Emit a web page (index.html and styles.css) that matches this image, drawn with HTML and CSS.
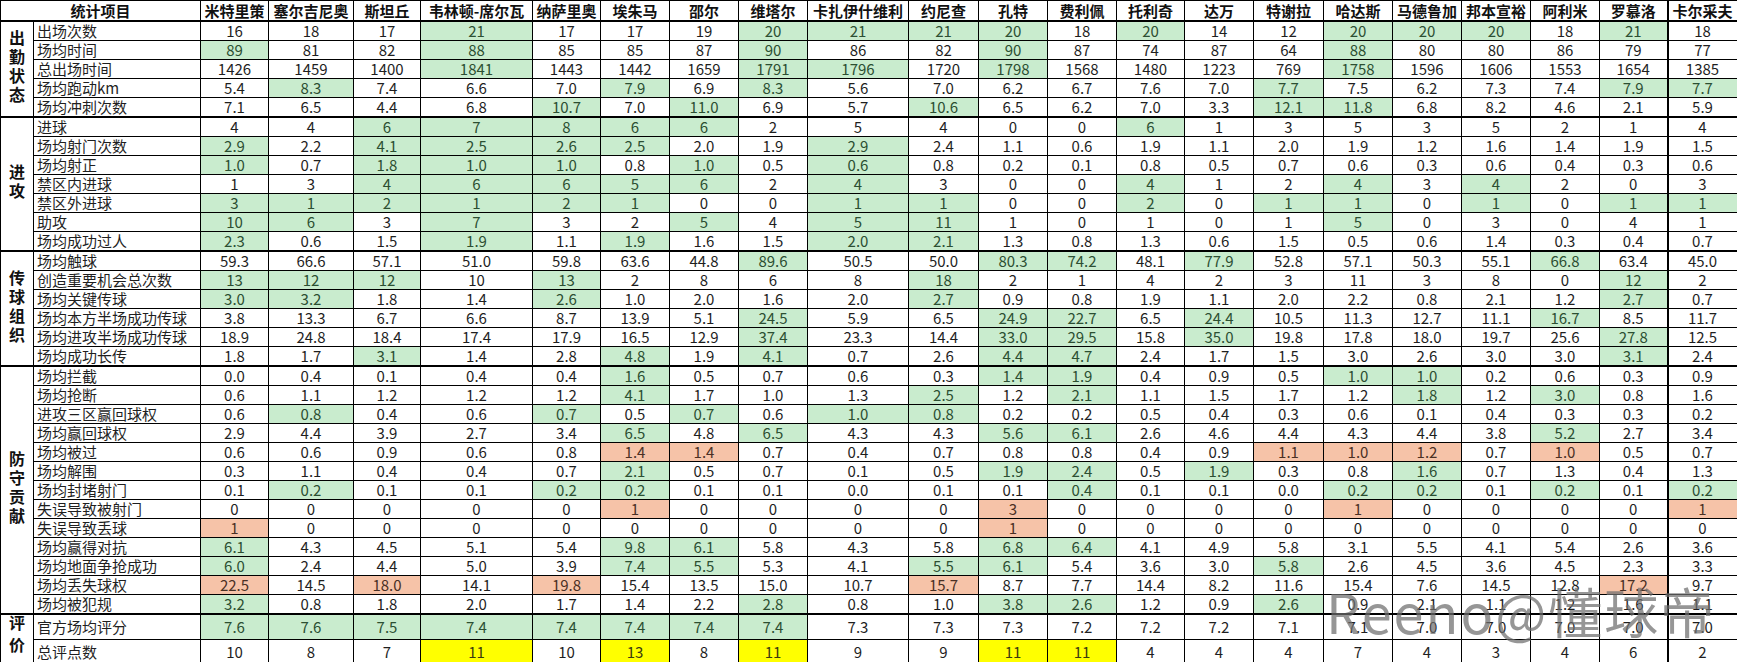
FILE: index.html
```html
<!DOCTYPE html>
<html lang="zh">
<head>
<meta charset="utf-8">
<title>球员数据统计</title>
<link rel="stylesheet" href="styles.css">
</head>
<body>
<div class="sheet">
<table class="stats">
<colgroup>
<col class="w-cat"><col class="w-lbl"><col class="w68"><col class="w85"><col class="w67"><col class="w112"><col class="w68"><col class="w69"><col class="w69"><col class="w69"><col class="w101"><col class="w70"><col class="w69"><col class="w69"><col class="w68"><col class="w69"><col class="w70"><col class="w69"><col class="w69"><col class="w69"><col class="w69"><col class="w68"><col class="w70">
</colgroup>
<thead>
<tr><th colspan="2">统计项目</th><th>米特里策</th><th>塞尔吉尼奥</th><th>斯坦丘</th><th>韦林顿-席尔瓦</th><th>纳萨里奥</th><th>埃朱马</th><th>邵尔</th><th>维塔尔</th><th>卡扎伊什维利</th><th>约尼查</th><th>孔特</th><th>费利佩</th><th>托利奇</th><th>达万</th><th>特谢拉</th><th>哈达斯</th><th>马德鲁加</th><th>邦本宣裕</th><th>阿利米</th><th>罗慕洛</th><th class="last">卡尔采夫</th></tr>
</thead>
<tbody>
<tr><td class="cat" rowspan="5"><span class="vt">出勤状态</span></td><td class="lbl">出场次数</td><td>16</td><td>18</td><td>17</td><td class="g">21</td><td>17</td><td>17</td><td>19</td><td class="g">20</td><td class="g">21</td><td class="g">21</td><td class="g">20</td><td>18</td><td class="g">20</td><td>14</td><td>12</td><td class="g">20</td><td class="g">20</td><td class="g">20</td><td>18</td><td class="g">21</td><td class="last">18</td></tr>
<tr><td class="lbl">场均时间</td><td class="g">89</td><td>81</td><td>82</td><td class="g">88</td><td>85</td><td>85</td><td>87</td><td class="g">90</td><td>86</td><td>82</td><td class="g">90</td><td>87</td><td>74</td><td>87</td><td>64</td><td class="g">88</td><td>80</td><td>80</td><td>86</td><td>79</td><td class="last">77</td></tr>
<tr><td class="lbl">总出场时间</td><td>1426</td><td>1459</td><td>1400</td><td class="g">1841</td><td>1443</td><td>1442</td><td>1659</td><td class="g">1791</td><td class="g">1796</td><td>1720</td><td class="g">1798</td><td>1568</td><td>1480</td><td>1223</td><td>769</td><td class="g">1758</td><td>1596</td><td>1606</td><td>1553</td><td>1654</td><td class="last">1385</td></tr>
<tr><td class="lbl">场均跑动km</td><td>5.4</td><td class="g">8.3</td><td>7.4</td><td>6.6</td><td>7.0</td><td class="g">7.9</td><td>6.9</td><td class="g">8.3</td><td>5.6</td><td>7.0</td><td>6.2</td><td>6.7</td><td>7.6</td><td>7.0</td><td class="g">7.7</td><td>7.5</td><td>6.2</td><td>7.3</td><td>7.4</td><td class="g">7.9</td><td class="last g">7.7</td></tr>
<tr><td class="lbl">场均冲刺次数</td><td>7.1</td><td>6.5</td><td>4.4</td><td>6.8</td><td class="g">10.7</td><td>7.0</td><td class="g">11.0</td><td>6.9</td><td>5.7</td><td class="g">10.6</td><td>6.5</td><td>6.2</td><td>7.0</td><td>3.3</td><td class="g">12.1</td><td class="g">11.8</td><td>6.8</td><td>8.2</td><td>4.6</td><td>2.1</td><td class="last">5.9</td></tr>

<tr class="sep"><td class="cat" rowspan="7"><span class="vt">进攻</span></td><td class="lbl">进球</td><td>4</td><td>4</td><td class="g">6</td><td class="g">7</td><td class="g">8</td><td class="g">6</td><td class="g">6</td><td>2</td><td>5</td><td>4</td><td>0</td><td>0</td><td class="g">6</td><td>1</td><td>3</td><td>5</td><td>3</td><td>5</td><td>2</td><td>1</td><td class="last">4</td></tr>
<tr><td class="lbl">场均射门次数</td><td class="g">2.9</td><td>2.2</td><td class="g">4.1</td><td class="g">2.5</td><td class="g">2.6</td><td class="g">2.5</td><td>2.0</td><td>1.9</td><td class="g">2.9</td><td>2.4</td><td>1.1</td><td>0.6</td><td>1.9</td><td>1.1</td><td>2.0</td><td>1.9</td><td>1.2</td><td>1.6</td><td>1.4</td><td>1.9</td><td class="last">1.5</td></tr>
<tr><td class="lbl">场均射正</td><td class="g">1.0</td><td>0.7</td><td class="g">1.8</td><td class="g">1.0</td><td class="g">1.0</td><td>0.8</td><td class="g">1.0</td><td>0.5</td><td class="g">0.6</td><td>0.8</td><td>0.2</td><td>0.1</td><td>0.8</td><td>0.5</td><td>0.7</td><td>0.6</td><td>0.3</td><td>0.6</td><td>0.4</td><td>0.3</td><td class="last">0.6</td></tr>
<tr><td class="lbl">禁区内进球</td><td>1</td><td>3</td><td class="g">4</td><td class="g">6</td><td class="g">6</td><td class="g">5</td><td class="g">6</td><td>2</td><td class="g">4</td><td>3</td><td>0</td><td>0</td><td class="g">4</td><td>1</td><td>2</td><td class="g">4</td><td>3</td><td class="g">4</td><td>2</td><td>0</td><td class="last">3</td></tr>
<tr><td class="lbl">禁区外进球</td><td class="g">3</td><td class="g">1</td><td class="g">2</td><td class="g">1</td><td class="g">2</td><td class="g">1</td><td>0</td><td>0</td><td class="g">1</td><td class="g">1</td><td>0</td><td>0</td><td class="g">2</td><td>0</td><td class="g">1</td><td class="g">1</td><td>0</td><td class="g">1</td><td>0</td><td class="g">1</td><td class="last g">1</td></tr>
<tr><td class="lbl">助攻</td><td class="g">10</td><td class="g">6</td><td>3</td><td class="g">7</td><td>3</td><td>2</td><td class="g">5</td><td>4</td><td class="g">5</td><td class="g">11</td><td>1</td><td>0</td><td>1</td><td>0</td><td>1</td><td class="g">5</td><td>0</td><td>3</td><td>0</td><td>4</td><td class="last">1</td></tr>
<tr><td class="lbl">场均成功过人</td><td class="g">2.3</td><td>0.6</td><td>1.5</td><td class="g">1.9</td><td>1.1</td><td class="g">1.9</td><td>1.6</td><td>1.5</td><td class="g">2.0</td><td class="g">2.1</td><td>1.3</td><td>0.8</td><td>1.3</td><td>0.6</td><td>1.5</td><td>0.5</td><td>0.6</td><td>1.4</td><td>0.3</td><td>0.4</td><td class="last">0.7</td></tr>

<tr class="sep"><td class="cat" rowspan="6"><span class="vt">传球组织</span></td><td class="lbl">场均触球</td><td>59.3</td><td>66.6</td><td>57.1</td><td>51.0</td><td>59.8</td><td>63.6</td><td>44.8</td><td class="g">89.6</td><td>50.5</td><td>50.0</td><td class="g">80.3</td><td class="g">74.2</td><td>48.1</td><td class="g">77.9</td><td>52.8</td><td>57.1</td><td>50.3</td><td>55.1</td><td class="g">66.8</td><td>63.4</td><td class="last">45.0</td></tr>
<tr><td class="lbl">创造重要机会总次数</td><td class="g">13</td><td class="g">12</td><td class="g">12</td><td>10</td><td class="g">13</td><td>2</td><td>8</td><td>6</td><td>8</td><td class="g">18</td><td>2</td><td>1</td><td>4</td><td>2</td><td>3</td><td>11</td><td>3</td><td>8</td><td>0</td><td class="g">12</td><td class="last">2</td></tr>
<tr><td class="lbl">场均关键传球</td><td class="g">3.0</td><td class="g">3.2</td><td>1.8</td><td>1.4</td><td class="g">2.6</td><td>1.0</td><td>2.0</td><td>1.6</td><td>2.0</td><td class="g">2.7</td><td>0.9</td><td>0.8</td><td>1.9</td><td>1.1</td><td>2.0</td><td>2.2</td><td>0.8</td><td>2.1</td><td>1.2</td><td class="g">2.7</td><td class="last">0.7</td></tr>
<tr><td class="lbl">场均本方半场成功传球</td><td>3.8</td><td>13.3</td><td>6.7</td><td>6.6</td><td>8.7</td><td>13.9</td><td>5.1</td><td class="g">24.5</td><td>5.9</td><td>6.5</td><td class="g">24.9</td><td class="g">22.7</td><td>6.5</td><td class="g">24.4</td><td>10.5</td><td>11.3</td><td>12.7</td><td>11.1</td><td class="g">16.7</td><td>8.5</td><td class="last">11.7</td></tr>
<tr><td class="lbl">场均进攻半场成功传球</td><td>18.9</td><td>24.8</td><td>18.4</td><td>17.4</td><td>17.9</td><td>16.5</td><td>12.9</td><td class="g">37.4</td><td>23.3</td><td>14.4</td><td class="g">33.0</td><td class="g">29.5</td><td>15.8</td><td class="g">35.0</td><td>19.8</td><td>17.8</td><td>18.0</td><td>19.7</td><td>25.6</td><td class="g">27.8</td><td class="last">12.5</td></tr>
<tr><td class="lbl">场均成功长传</td><td>1.8</td><td>1.7</td><td class="g">3.1</td><td>1.4</td><td>2.8</td><td class="g">4.8</td><td>1.9</td><td class="g">4.1</td><td>0.7</td><td>2.6</td><td class="g">4.4</td><td class="g">4.7</td><td>2.4</td><td>1.7</td><td>1.5</td><td>3.0</td><td>2.6</td><td>3.0</td><td>3.0</td><td class="g">3.1</td><td class="last">2.4</td></tr>

<tr class="sep"><td class="cat" rowspan="13"><span class="vt">防守贡献</span></td><td class="lbl">场均拦截</td><td>0.0</td><td>0.4</td><td>0.1</td><td>0.4</td><td>0.4</td><td class="g">1.6</td><td>0.5</td><td>0.7</td><td>0.6</td><td>0.3</td><td class="g">1.4</td><td class="g">1.9</td><td>0.4</td><td>0.9</td><td>0.5</td><td class="g">1.0</td><td class="g">1.0</td><td>0.2</td><td>0.6</td><td>0.3</td><td class="last">0.9</td></tr>
<tr><td class="lbl">场均抢断</td><td>0.6</td><td>1.1</td><td>1.2</td><td>1.2</td><td>1.2</td><td class="g">4.1</td><td>1.7</td><td>1.0</td><td>1.3</td><td class="g">2.5</td><td>1.2</td><td class="g">2.1</td><td>1.1</td><td>1.5</td><td>1.7</td><td>1.2</td><td class="g">1.8</td><td>1.2</td><td class="g">3.0</td><td>0.8</td><td class="last">1.6</td></tr>
<tr><td class="lbl">进攻三区赢回球权</td><td>0.6</td><td class="g">0.8</td><td>0.4</td><td>0.6</td><td class="g">0.7</td><td>0.5</td><td class="g">0.7</td><td>0.6</td><td class="g">1.0</td><td class="g">0.8</td><td>0.2</td><td>0.2</td><td>0.5</td><td>0.4</td><td>0.3</td><td>0.6</td><td>0.1</td><td>0.4</td><td>0.3</td><td>0.3</td><td class="last">0.2</td></tr>
<tr><td class="lbl">场均赢回球权</td><td>2.9</td><td>4.4</td><td>3.9</td><td>2.7</td><td>3.4</td><td class="g">6.5</td><td>4.8</td><td class="g">6.5</td><td>4.3</td><td>4.3</td><td class="g">5.6</td><td class="g">6.1</td><td>2.6</td><td>4.6</td><td>4.4</td><td>4.3</td><td>4.4</td><td>3.8</td><td class="g">5.2</td><td>2.7</td><td class="last">3.4</td></tr>
<tr><td class="lbl">场均被过</td><td>0.6</td><td>0.6</td><td>0.9</td><td>0.6</td><td>0.8</td><td class="r">1.4</td><td class="r">1.4</td><td>0.7</td><td>0.4</td><td>0.7</td><td>0.8</td><td>0.8</td><td>0.4</td><td>0.9</td><td class="r">1.1</td><td class="r">1.0</td><td class="r">1.2</td><td>0.7</td><td class="r">1.0</td><td>0.5</td><td class="last">0.7</td></tr>
<tr><td class="lbl">场均解围</td><td>0.3</td><td>1.1</td><td>0.4</td><td>0.4</td><td>0.7</td><td class="g">2.1</td><td>0.5</td><td>0.7</td><td>0.1</td><td>0.5</td><td class="g">1.9</td><td class="g">2.4</td><td>0.5</td><td class="g">1.9</td><td>0.3</td><td>0.8</td><td class="g">1.6</td><td>0.7</td><td>1.3</td><td>0.4</td><td class="last">1.3</td></tr>
<tr><td class="lbl">场均封堵射门</td><td>0.1</td><td class="g">0.2</td><td>0.1</td><td>0.1</td><td class="g">0.2</td><td class="g">0.2</td><td>0.1</td><td>0.1</td><td>0.0</td><td>0.1</td><td>0.1</td><td class="g">0.4</td><td>0.1</td><td>0.1</td><td>0.0</td><td class="g">0.2</td><td class="g">0.2</td><td>0.1</td><td class="g">0.2</td><td>0.1</td><td class="last g">0.2</td></tr>
<tr><td class="lbl">失误导致被射门</td><td>0</td><td>0</td><td>0</td><td>0</td><td>0</td><td class="r">1</td><td>0</td><td>0</td><td>0</td><td>0</td><td class="r">3</td><td>0</td><td>0</td><td>0</td><td>0</td><td class="r">1</td><td>0</td><td>0</td><td>0</td><td>0</td><td class="last r">1</td></tr>
<tr><td class="lbl">失误导致丢球</td><td class="r">1</td><td>0</td><td>0</td><td>0</td><td>0</td><td>0</td><td>0</td><td>0</td><td>0</td><td>0</td><td class="r">1</td><td>0</td><td>0</td><td>0</td><td>0</td><td>0</td><td>0</td><td>0</td><td>0</td><td>0</td><td class="last">0</td></tr>
<tr><td class="lbl">场均赢得对抗</td><td class="g">6.1</td><td>4.3</td><td>4.5</td><td>5.1</td><td>5.4</td><td class="g">9.8</td><td class="g">6.1</td><td>5.8</td><td>4.3</td><td>5.8</td><td class="g">6.8</td><td class="g">6.4</td><td>4.1</td><td>4.9</td><td>5.8</td><td>3.1</td><td>5.5</td><td>4.1</td><td>5.4</td><td>2.6</td><td class="last">3.6</td></tr>
<tr><td class="lbl">场均地面争抢成功</td><td class="g">6.0</td><td>2.4</td><td>4.4</td><td>5.0</td><td>3.9</td><td class="g">7.4</td><td class="g">5.5</td><td>5.3</td><td>4.1</td><td class="g">5.5</td><td class="g">6.1</td><td>5.4</td><td>3.6</td><td>3.0</td><td class="g">5.8</td><td>2.6</td><td>4.5</td><td>3.6</td><td>4.5</td><td>2.3</td><td class="last">3.3</td></tr>
<tr><td class="lbl">场均丢失球权</td><td class="r">22.5</td><td>14.5</td><td class="r">18.0</td><td>14.1</td><td class="r">19.8</td><td>15.4</td><td>13.5</td><td>15.0</td><td>10.7</td><td class="r">15.7</td><td>8.7</td><td>7.7</td><td>14.4</td><td>8.2</td><td>11.6</td><td>15.4</td><td>7.6</td><td>14.5</td><td>12.8</td><td class="r">17.2</td><td class="last">9.7</td></tr>
<tr><td class="lbl">场均被犯规</td><td class="g">3.2</td><td>0.8</td><td>1.8</td><td>2.0</td><td>1.7</td><td>1.4</td><td>2.2</td><td class="g">2.8</td><td>0.8</td><td>1.0</td><td class="g">3.8</td><td class="g">2.6</td><td>1.2</td><td>0.9</td><td class="g">2.6</td><td>0.9</td><td>2.1</td><td>1.1</td><td>1.2</td><td>1.6</td><td class="last">1.1</td></tr>

<tr class="sep eval"><td class="cat" rowspan="2"><span class="vt vt-wide">评价</span></td><td class="lbl">官方场均评分</td><td class="g">7.6</td><td class="g">7.6</td><td class="g">7.5</td><td class="g">7.4</td><td class="g">7.4</td><td class="g">7.4</td><td class="g">7.4</td><td class="g">7.4</td><td>7.3</td><td>7.3</td><td>7.3</td><td>7.2</td><td>7.2</td><td>7.2</td><td>7.1</td><td>7.1</td><td>7.0</td><td>7.0</td><td>7.0</td><td>7.0</td><td class="last">7.0</td></tr>
<tr class="eval end"><td class="lbl">总评点数</td><td>10</td><td>8</td><td>7</td><td class="y">11</td><td>10</td><td class="y">13</td><td>8</td><td class="y">11</td><td>9</td><td>9</td><td class="y">11</td><td class="y">11</td><td>4</td><td>4</td><td>4</td><td>7</td><td>4</td><td>3</td><td>4</td><td>6</td><td class="last">2</td></tr>
</tbody>
</table>
<div class="watermark">Reeno@懂球帝</div>
</div>
</body>
</html>
```
FILE: styles.css
```css
html, body {
  margin: 0;
  padding: 0;
  background: #ffffff;
}

.sheet {
  position: relative;
  width: 1737px;
}

.stats {
  border-collapse: collapse;
  table-layout: fixed;
  width: 1737px;
  font-family: "Noto Sans CJK SC", "Liberation Sans", sans-serif;
  font-size: 15px;
  color: #1f1f1f;
}

.w-cat { width: 33px; }
.w-lbl { width: 167px; }
.w67 { width: 67px; }
.w68 { width: 68px; }
.w69 { width: 69px; }
.w70 { width: 70px; }
.w85 { width: 85px; }
.w101 { width: 101px; }
.w112 { width: 112px; }

.stats th,
.stats td {
  border: 1px solid #000;
  padding: 0;
  height: 18px;
  line-height: 18px;
  text-align: center;
  white-space: nowrap;
  overflow: hidden;
}

.stats th {
  font-weight: bold;
  height: 19px;
  line-height: 19px;
  color: #111;
  border-bottom: 2px solid #000;
}

.stats td.cat {
  font-weight: bold;
  font-size: 16px;
  color: #111;
  vertical-align: middle;
}

.vt {
  display: inline-block;
  writing-mode: vertical-rl;
  text-orientation: upright;
  letter-spacing: 3px;
  line-height: 20px;
}

.vt-wide {
  letter-spacing: 6px;
}

.stats td.lbl {
  text-align: left;
  padding-left: 3px;
}

.stats tr.sep td {
  border-top: 2px solid #000;
}

.stats tr.eval td {
  height: 23px;
  line-height: 23px;
}

.stats tr.end td {
  border-bottom: 2px solid #000;
}

.stats .last {
  border-left: 2px solid #000;
  border-right: 2px solid #000;
}

.stats td.g {
  background: #c9ecce;
  color: #2c4f32;
}

.stats td.r {
  background: #f6c3a8;
  color: #4a3024;
}

.stats td.y {
  background: #ffff00;
  color: #3b3b10;
}

.watermark {
  position: absolute;
  left: 1326px;
  top: 578px;
  font-family: "Noto Sans CJK SC", "Noto Sans", sans-serif;
  font-size: 54px;
  line-height: 66px;
  letter-spacing: 2px;
  color: rgba(110, 110, 110, 0.72);
  white-space: nowrap;
  pointer-events: none;
}
```
